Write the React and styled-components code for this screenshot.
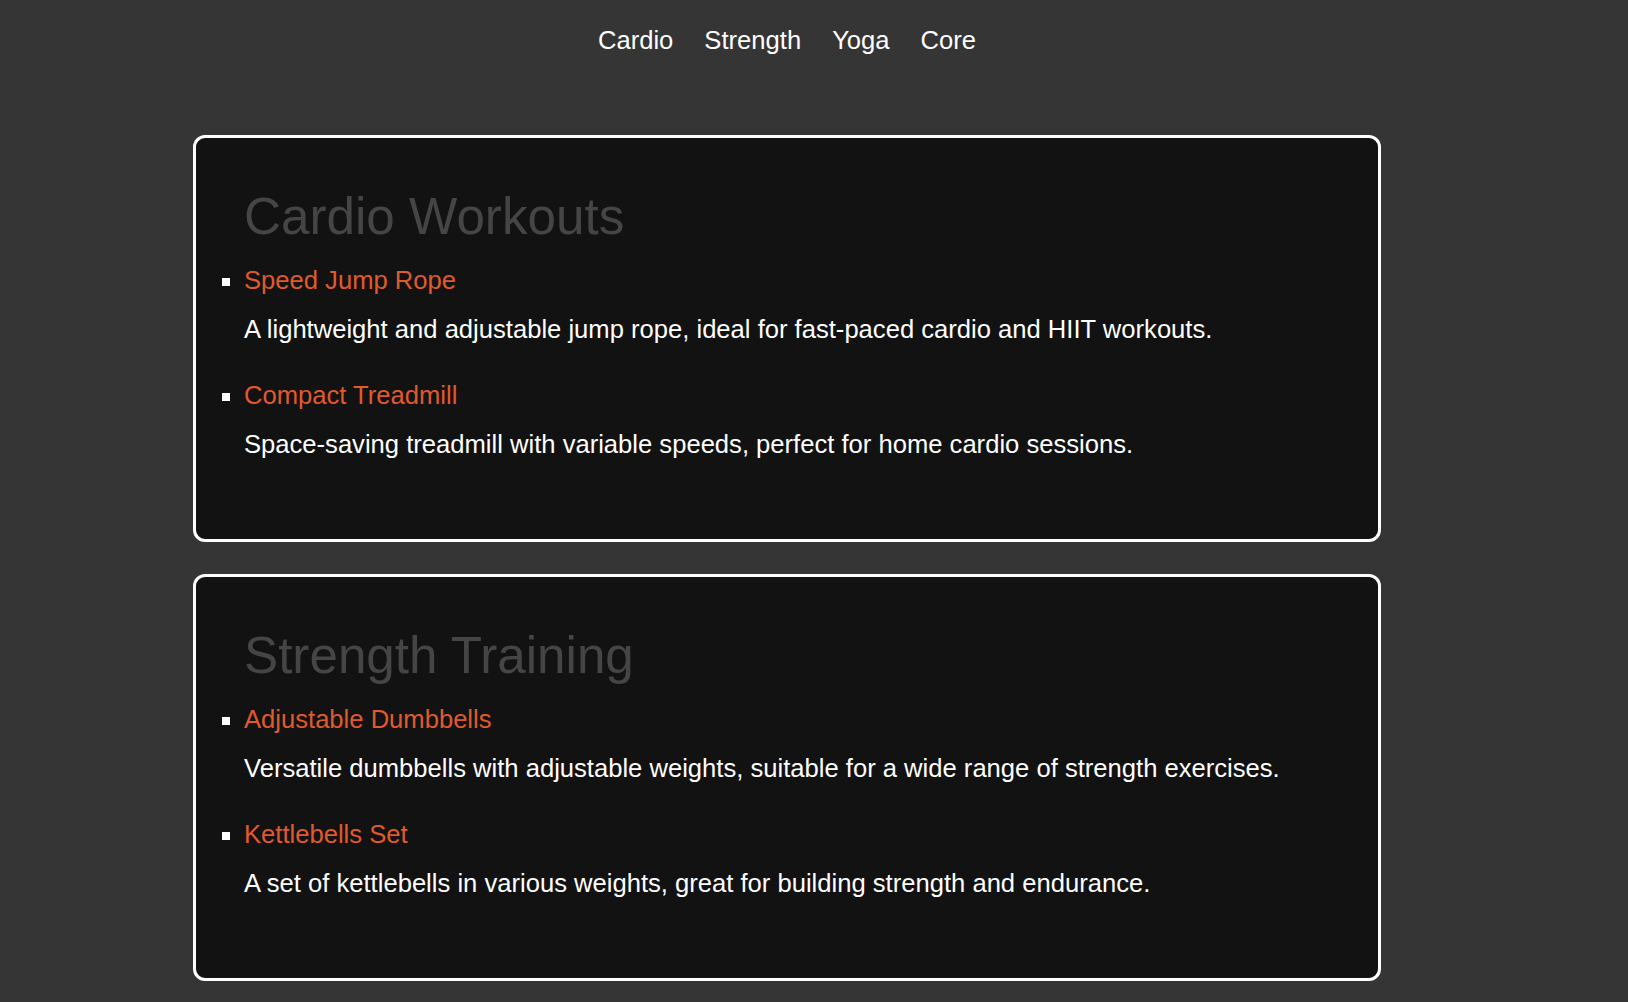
import React from 'react'
import styled, { createGlobalStyle } from 'styled-components'

const GlobalStyle = createGlobalStyle`
  html, body {
    margin: 0;
    padding: 0;
    background: #353535;
  }
  body {
    font-family: "Liberation Sans", Arial, Helvetica, sans-serif;
    color: #ffffff;
  }
`

const Page = styled.div`
  width: 1574px;
  min-height: 1002px;
`

const Nav = styled.nav`
  display: flex;
  justify-content: center;
  gap: 31px;
  padding-top: 25px;
`

const NavLink = styled.a`
  font-size: 25.6px;
  line-height: 30px;
  color: #ffffff;
  text-decoration: none;
  cursor: pointer;
`

const Main = styled.main`
  width: 1188px;
  margin: 80px auto 0;
  display: flex;
  flex-direction: column;
  gap: 32px;
`

const Card = styled.section`
  background: #121212;
  border: 3px solid #ffffff;
  border-radius: 12px;
  padding: 50px 48px 44px;
`

const Heading = styled.h2`
  margin: 0 0 19px;
  font-size: 51.2px;
  line-height: 58px;
  font-weight: 400;
  color: #454545;
`

const List = styled.ul`
  margin: 0;
  padding: 0;
  list-style: square outside;
`

const Item = styled.li`
  color: #ffffff;
  font-size: 25.6px;
`

const ItemTitle = styled.h3`
  margin: 0 0 19px;
  font-size: 25.6px;
  line-height: 30px;
  font-weight: 400;
  color: #e05a2c;
`

const ItemText = styled.p`
  margin: 0 0 36px;
  font-size: 25.6px;
  line-height: 30px;
  color: #ffffff;
`

const sections = [
  {
    title: 'Cardio Workouts',
    items: [
      {
        name: 'Speed Jump Rope',
        text: 'A lightweight and adjustable jump rope, ideal for fast-paced cardio and HIIT workouts.',
      },
      {
        name: 'Compact Treadmill',
        text: 'Space-saving treadmill with variable speeds, perfect for home cardio sessions.',
      },
    ],
  },
  {
    title: 'Strength Training',
    items: [
      {
        name: 'Adjustable Dumbbells',
        text: 'Versatile dumbbells with adjustable weights, suitable for a wide range of strength exercises.',
      },
      {
        name: 'Kettlebells Set',
        text: 'A set of kettlebells in various weights, great for building strength and endurance.',
      },
    ],
  },
]

const App = () => {
  return (
    <Page>
      <GlobalStyle />
      <Nav>
        <NavLink>Cardio</NavLink>
        <NavLink>Strength</NavLink>
        <NavLink>Yoga</NavLink>
        <NavLink>Core</NavLink>
      </Nav>
      <Main>
        {sections.map((section) => (
          <Card key={section.title}>
            <Heading>{section.title}</Heading>
            <List>
              {section.items.map((item) => (
                <Item key={item.name}>
                  <ItemTitle>{item.name}</ItemTitle>
                  <ItemText>{item.text}</ItemText>
                </Item>
              ))}
            </List>
          </Card>
        ))}
      </Main>
    </Page>
  )
}

export default App
